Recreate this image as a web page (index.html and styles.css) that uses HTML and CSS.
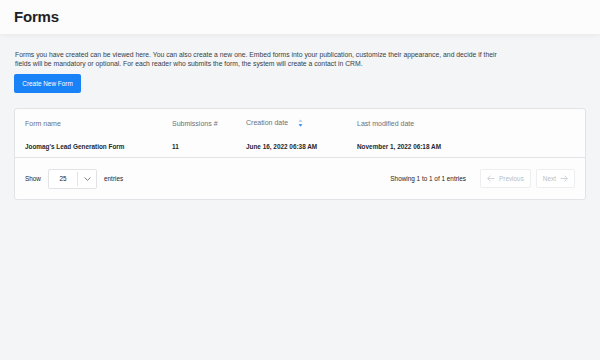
FILE: index.html
```html
<!DOCTYPE html>
<html lang="en">
<head>
  <meta charset="UTF-8">
  <title>Forms</title>
  <link rel="stylesheet" href="styles.css">
</head>
<body>
  <header class="page-header">
    <h1 class="page-title">Forms</h1>
  </header>

  <main class="content">
    <p class="intro">
      Forms you have created can be viewed here. You can also create a new one. Embed forms into your publication, customize their appearance, and decide if their
      fields will be mandatory or optional. For each reader who submits the form, the system will create a contact in CRM.
    </p>

    <button class="btn-primary">Create New Form</button>

    <section class="card">
      <table class="forms-table">
        <thead>
          <tr>
            <th class="col-name">Form name</th>
            <th class="col-subs">Submissions #</th>
            <th class="col-created">
              Creation date
              <svg class="sort-icon" width="5" height="8" viewBox="0 0 5 8">
                <path d="M2.5 0.5 L4.5 2.8 L0.5 2.8 Z" fill="#b9c4d4"/>
                <path d="M2.5 7.5 L4.5 5.2 L0.5 5.2 Z" fill="#1a82f7"/>
              </svg>
            </th>
            <th class="col-modified">Last modified date</th>
          </tr>
        </thead>
        <tbody>
          <tr>
            <td>Joomag's Lead Generation Form</td>
            <td>11</td>
            <td>June 16, 2022 06:38 AM</td>
            <td>November 1, 2022 06:18 AM</td>
          </tr>
        </tbody>
      </table>

      <div class="card-footer">
        <div class="page-size">
          <span>Show</span>
          <div class="select">
            <span class="select-value">25</span>
            <span class="select-arrow">
              <svg width="7" height="4" viewBox="0 0 7 4">
                <path d="M0.5 0.5 L3.5 3.3 L6.5 0.5" fill="none" stroke="#5c6370" stroke-width="0.8"/>
              </svg>
            </span>
          </div>
          <span>entries</span>
        </div>

        <div class="pager">
          <span class="pager-info">Showing 1 to 1 of 1 entries</span>
          <button class="pager-btn pager-prev">
            <svg width="8" height="7" viewBox="0 0 8 7">
              <path d="M7.5 3.5 H0.8 M3.5 0.6 L0.7 3.5 L3.5 6.4" fill="none" stroke="#c4c8ce" stroke-width="0.8"/>
            </svg>
            Previous
          </button>
          <button class="pager-btn pager-next">
            Next
            <svg width="8" height="7" viewBox="0 0 8 7">
              <path d="M0.5 3.5 H7.2 M4.5 0.6 L7.3 3.5 L4.5 6.4" fill="none" stroke="#c4c8ce" stroke-width="0.8"/>
            </svg>
          </button>
        </div>
      </div>
    </section>
  </main>
</body>
</html>
```

FILE: styles.css
```css
:root {
  --bg-page: #f4f5f7;
  --bg-card: #fdfdfd;
  --border: #e1e3e6;
  --text-dark: #1e2126;
  --text-body: #3a3e45;
  --text-muted: #6b7079;
  --text-faint: #b8bcc2;
  --accent: #1a82f7;
}

body {
  margin: 0;
  background-color: var(--bg-page);
  font-family: 'Liberation Sans', Arial, sans-serif;
  color: var(--text-body);
}

.page-header {
  height: 34px;
  background-color: #fcfcfc;
  box-shadow: 0 1px 6px rgba(0, 0, 0, 0.06);
  display: flex;
  align-items: center;
  padding: 0 14px;
}

.page-title {
  margin: 0 0 2px;
  font-size: 15px;
  font-weight: 700;
  color: var(--text-dark);
  letter-spacing: -0.2px;
}

.content {
  padding: 0 14px;
}

.intro {
  max-width: 490px;
  margin: 16px 0 0 1px;
  font-size: 6.8px;
  line-height: 9px;
  color: var(--text-body);
}

.btn-primary {
  display: block;
  margin-top: 6px;
  width: 67px;
  height: 19px;
  padding: 0;
  background-color: var(--accent);
  color: white;
  border: none;
  border-radius: 2px;
  font-family: inherit;
  font-size: 6.4px;
}

.card {
  margin-top: 15px;
  background-color: var(--bg-card);
  border: 1px solid var(--border);
  border-radius: 3px;
}

.forms-table {
  width: 100%;
  border-collapse: collapse;
  font-size: 6.4px;
}

.forms-table th,
.forms-table td {
  text-align: left;
  padding: 0;
}

.forms-table th {
  height: 26px;
  padding-top: 1px;
  font-weight: 400;
  font-size: 7px;
  color: var(--text-muted);
}

.forms-table td {
  height: 20px;
  padding-bottom: 1px;
  color: #25282d;
  font-weight: 700;
  border-bottom: 1px solid var(--border);
}

.forms-table th:first-child,
.forms-table td:first-child {
  padding-left: 10px;
}

.col-name { width: 147px; }
.col-subs { width: 74px; }
.col-created { width: 111px; }

.sort-icon {
  vertical-align: middle;
  margin-left: 8px;
}

.card-footer {
  height: 41px;
  display: flex;
  align-items: center;
  justify-content: space-between;
  padding: 0 10px;
  font-size: 6.4px;
  color: var(--text-dark);
}

.page-size {
  display: flex;
  align-items: center;
  gap: 7px;
}

.select {
  display: flex;
  width: 47px;
  height: 18px;
  border: 1px solid var(--border);
  border-radius: 2px;
  background-color: white;
}

.select-value {
  flex: 1;
  display: flex;
  align-items: center;
  justify-content: center;
  border-right: 1px solid var(--border);
  margin: 2px 0;
}

.select-arrow {
  width: 18px;
  display: flex;
  align-items: center;
  justify-content: center;
}

.pager {
  display: flex;
  align-items: center;
  gap: 5px;
}

.pager-info {
  margin-right: 9px;
}

.pager-btn {
  display: flex;
  align-items: center;
  gap: 4px;
  height: 19px;
  padding: 0 6px;
  background-color: white;
  border: 1px solid #eceef0;
  border-radius: 2px;
  font-family: inherit;
  font-size: 6.4px;
  color: var(--text-faint);
}
```
